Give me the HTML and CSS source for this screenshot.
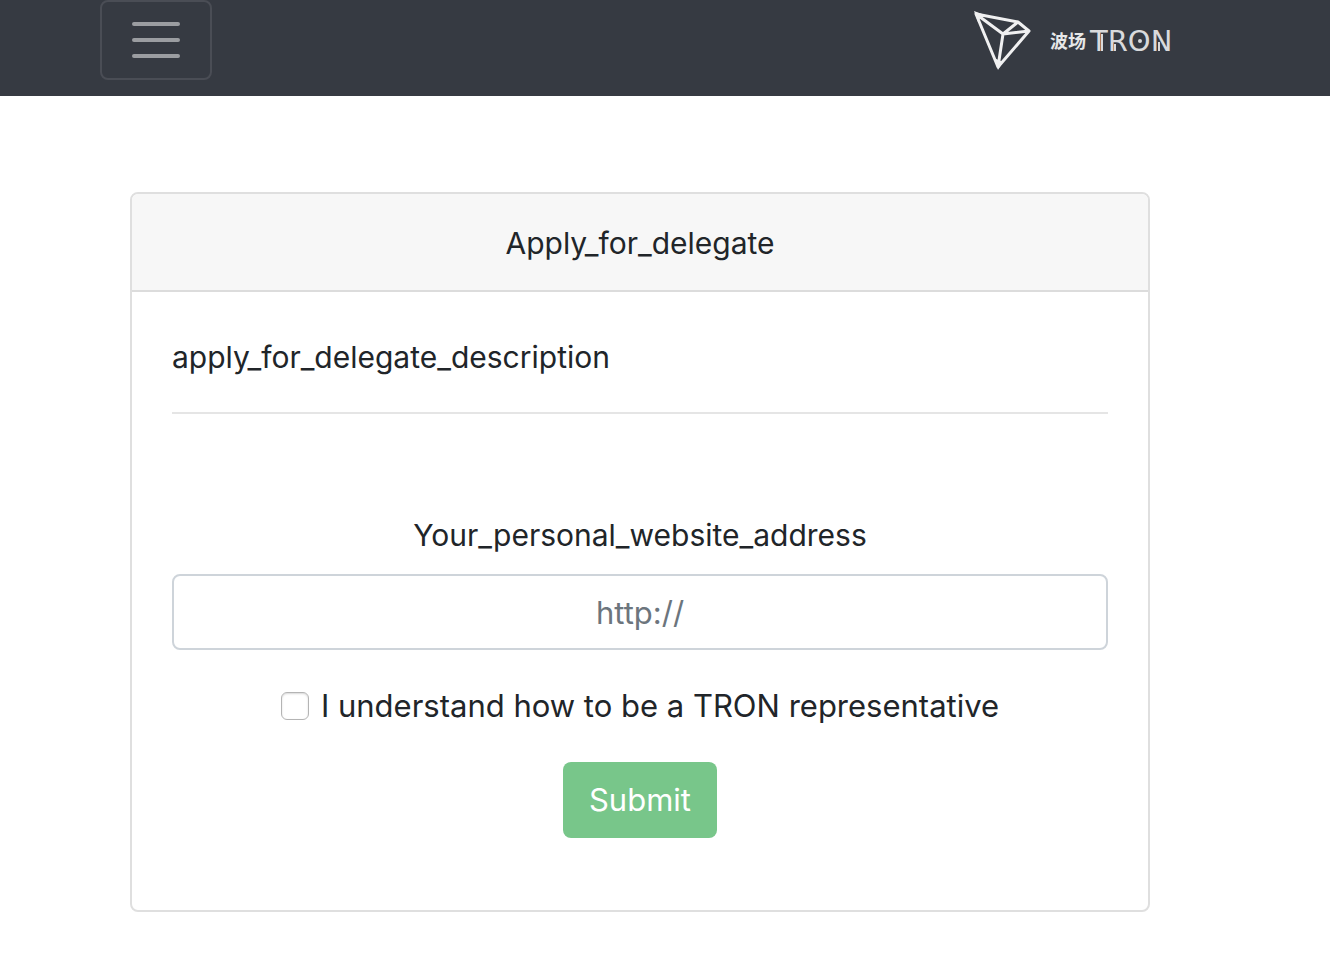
FILE: index.html
```html
<!DOCTYPE html>
<html lang="en">
<head>
<meta charset="utf-8">
<title>Apply for delegate</title>
<link rel="stylesheet" href="styles.css">
</head>
<body>
<header class="navbar">
  <button class="toggler" type="button" aria-label="Toggle navigation">
    <svg width="60" height="60" viewBox="0 0 30 30" aria-hidden="true"><path d="M4 7h22M4 15h22M4 23h22"/></svg>
  </button>
  <a class="brand" href="#" aria-label="TRON">
    <svg width="204" height="64" viewBox="0 0 204 64" aria-hidden="true">
      <path class="mark" d="M4 6 46 14 57 23 26 59ZM4 6 31 26 26 59M31 26 46 14M31 26 57 23"/>
      <path class="mark-tip" d="M2 3 10 6 6 14ZM22 50 26 62 31 54Z"/>
      <text class="brand-cn" x="78" y="40">波场</text>
      <text class="brand-en" x="118" y="43">TRON</text>
      <circle class="dot" cx="168" cy="33" r="2"/>
      <path class="accent" d="M130 26V43M143 36V43M187 34V43"/>
    </svg>
  </a>
</header>
<main class="page">
  <section class="card">
    <h1 class="card-header">Apply_for_delegate</h1>
    <div class="card-body">
      <p class="description">apply_for_delegate_description</p>
      <hr class="divider">
      <form class="form">
        <label class="label" for="website">Your_personal_website_address</label>
        <input class="input" id="website" type="text" placeholder="http://">
        <div class="check">
          <input class="checkbox" id="understand" type="checkbox">
          <label for="understand">I understand how to be a TRON representative</label>
        </div>
        <button class="submit" type="button">Submit</button>
      </form>
    </div>
  </section>
</main>
</body>
</html>
```
FILE: styles.css
```css
* { box-sizing: border-box; }
body {
  margin: 0;
  background: #fff;
  color: #212529;
  font: 400 30px/48px Inter, "Noto Sans CJK SC", sans-serif;
}
.navbar {
  display: flex;
  justify-content: space-between;
  align-items: flex-start;
  padding: 0 154px 16px 100px;
  background: #363a42;
}
.toggler {
  display: flex;
  width: 112px;
  height: 80px;
  align-items: center;
  justify-content: center;
  padding: 0;
  background: transparent;
  border: 2px solid #4a4d55;
  border-radius: 8px;
}
.toggler path {
  fill: none;
  stroke: #9b9da1;
  stroke-width: 2;
  stroke-linecap: round;
}
.brand { display: flex; padding-top: 8px; }
.mark {
  fill: none;
  stroke: #f0f0f1;
  stroke-width: 3;
  stroke-linejoin: round;
}
.mark-tip { fill: #f0f0f1; }
.brand-cn { fill: #e6e7e8; font: 700 18px "Noto Sans CJK SC", sans-serif; }
.brand-en { fill: #d9dadc; font: 400 29px "DejaVu Sans", sans-serif; }
.dot { fill: #d9dadc; }
.accent { fill: none; stroke: #d9dadc; stroke-width: 2; }
.page { padding: 96px 180px 48px 130px; }
.card {
  border: 2px solid #dfdfdf;
  border-radius: 8px;
  overflow: hidden;
}
.card-header {
  margin: 0;
  padding: 25px 40px 23px;
  background: #f7f7f7;
  border-bottom: 2px solid #dcdcdc;
  font-size: 30px;
  font-weight: 400;
  text-align: center;
}
.card-body { padding: 41px 40px 72px; }
.description { margin: 0; }
.divider {
  margin: 31px 0 97px;
  border: 0;
  border-top: 2px solid #e5e5e5;
}
.form {
  display: flex;
  flex-direction: column;
  align-items: center;
}
.label { margin-bottom: 15px; }
.input {
  width: 100%;
  height: 76px;
  padding: 12px 24px;
  background: #fff;
  border: 2px solid #ced4da;
  border-radius: 8px;
  color: #495057;
  font: inherit;
  font-size: 31px;
  text-align: center;
}
.input::placeholder { color: #6c757d; opacity: 1; }
.check {
  display: flex;
  align-items: center;
  gap: 12px;
  margin: 32px 0;
  font-size: 31px;
}
.checkbox {
  appearance: none;
  width: 28px;
  height: 28px;
  margin: 0;
  background: #fff;
  border: 1px solid #b4b4b4;
  border-radius: 6px;
  box-shadow: inset 0 1px 2px #d8d8d8;
}
.checkbox:checked { background: #28a745; }
.submit {
  height: 76px;
  padding: 0 26px;
  background: #78c68a;
  border: 0;
  border-radius: 8px;
  color: #fff;
  font: inherit;
  font-size: 31px;
}
```
